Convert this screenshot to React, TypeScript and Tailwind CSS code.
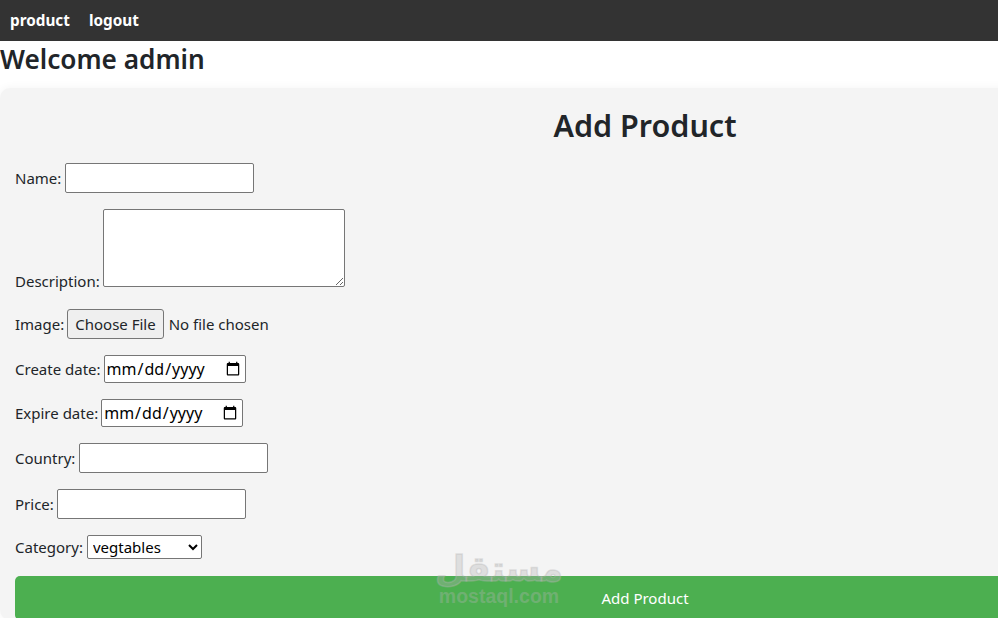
export default function App() {
  const font = "font-['Noto_Sans',sans-serif]";
  const inputCls = "h-[30px] w-[189px] rounded-[2px] border border-[#767676] bg-white px-1";
  const dateCls = "h-[28px] w-[142px] rounded-[2px] border border-[#767676] bg-white pl-[1px] pr-[2px] text-[16px] text-black";
  return (
    <div className={`relative h-[618px] w-[998px] overflow-hidden bg-white text-[15px] text-[#212529] ${font}`}>
      <nav className="flex h-[41px] items-center gap-[19px] bg-[#333333] pl-[10px] text-[15.3px] font-bold text-white">
        <span>product</span>
        <span>logout</span>
      </nav>
      <h2 className="h-[47px] text-[26.2px] leading-[37px] font-semibold">Welcome admin</h2>
      <div className="w-[1290px] rounded-[10px] bg-[#f4f4f4] px-[15px] pt-[15px] shadow-[0_0_10px_rgba(0,0,0,0.05)]">
        <h1 className="mb-[16px] h-[44px] text-center text-[30.5px] leading-[44px] font-semibold">Add Product</h1>
        <form>
          <div className="mb-[16px] flex items-center gap-1">
            <label>Name:</label>
            <input className={inputCls} />
          </div>
          <div className="mb-[22px] flex items-end gap-[3px]">
            <label className="leading-[12px]">Description:</label>
            <textarea className="h-[78px] w-[242px] rounded-[2px] border border-[#767676] bg-white" />
          </div>
          <div className="mb-[16px] flex h-[30px] items-center gap-[3px]">
            <label>Image:</label>
            <input type="file" className="w-[230px] file:mr-[5px] file:h-[30px] file:rounded-[3px] file:border file:border-[#767676] file:bg-[#efefef] file:px-[7px]" />
          </div>
          <div className="mb-[16px] flex items-center gap-[3px]">
            <label>Create date:</label>
            <input type="date" className={dateCls} />
          </div>
          <div className="mb-[16px] flex items-center gap-[3px]">
            <label>Expire date:</label>
            <input type="date" className={dateCls} />
          </div>
          <div className="mb-[16px] flex items-center gap-1">
            <label>Country:</label>
            <input className={inputCls} />
          </div>
          <div className="mb-[16px] flex items-center gap-[3px]">
            <label>Price:</label>
            <input className={inputCls} />
          </div>
          <div className="mb-[17px] flex items-center gap-1">
            <label>Category:</label>
            <select className="h-[24px] w-[115px] rounded-[2px] border border-[#767676] bg-white pl-[1px] text-[15px] text-black" style={{ appearance: "auto" }}>
              <option>vegtables</option>
            </select>
          </div>
          <button type="button" className="h-[44px] w-full rounded-[5px] bg-[#4caf50] text-center text-white">
            Add Product
          </button>
        </form>
      </div>
      <div className="pointer-events-none absolute top-[552px] left-[438px] flex w-[122px] flex-col items-center text-[#b4b4b4]/35">
        <span className="h-[35px] text-[35px] leading-[35px] font-bold font-['DejaVu_Sans',sans-serif] [-webkit-text-stroke:1.5px_rgba(180,180,180,0.35)]" dir="rtl">مستقل</span>
        <span className="text-[19.5px] leading-[18px] font-bold font-['Liberation_Sans',sans-serif]">mostaql.com</span>
      </div>
    </div>
  );
}
